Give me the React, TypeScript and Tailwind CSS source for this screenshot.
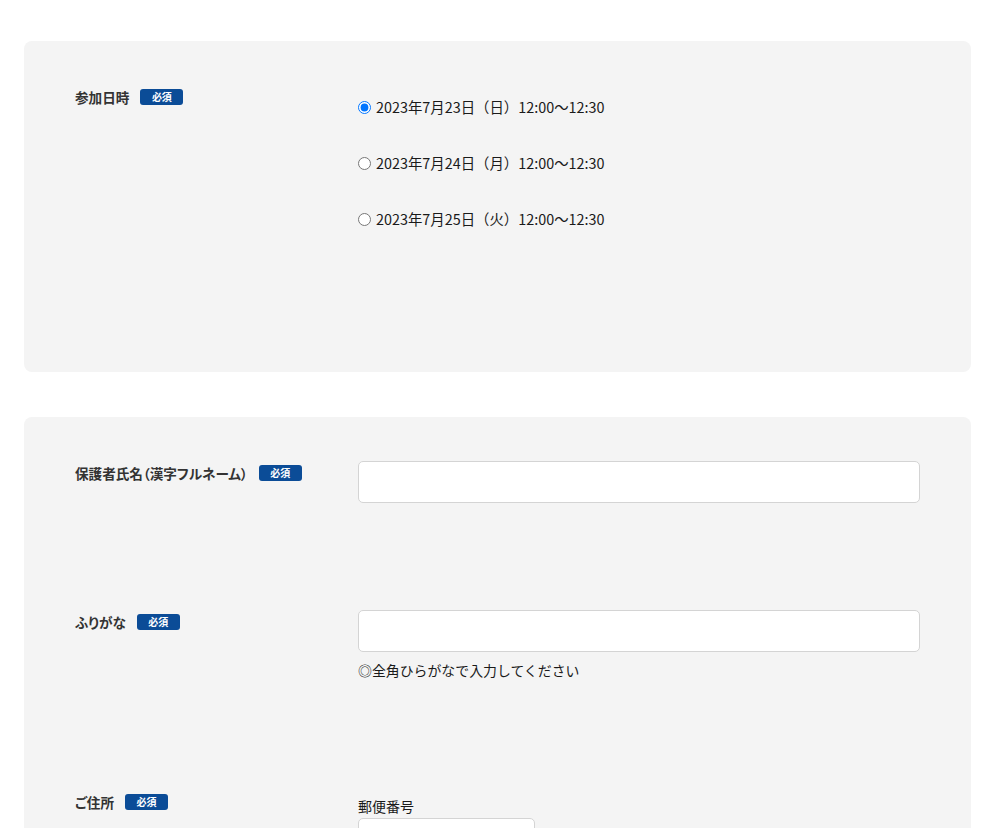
import React from "react";

const font = "font-['Noto_Sans_CJK_JP','Noto_Sans',sans-serif]";

function Badge() {
  return (
    <span className="inline-flex h-4 w-[43px] shrink-0 items-center justify-center rounded-[3px] bg-[#0b4c97] text-[10px] font-bold leading-none text-white">
      必須
    </span>
  );
}

function Label({ text, className = "" }: { text: string; className?: string }) {
  return (
    <div className={`flex items-center gap-[11px] self-start ${className}`}>
      <span className="text-[13.6px] font-bold leading-4 text-[#333] [font-feature-settings:'palt']">{text}</span>
      <Badge />
    </div>
  );
}

const options = [
  "2023年7月23日（日）12:00〜12:30",
  "2023年7月24日（月）12:00〜12:30",
  "2023年7月25日（火）12:00〜12:30",
];

export default function App() {
  const [sel, setSel] = React.useState(0);
  return (
    <div className={`min-h-[828px] bg-white pl-6 pr-[29px] pt-[41px] ${font}`}>
      <section className="grid grid-cols-[283px_1fr] rounded-lg bg-[#f4f4f4] px-[51px] pt-[48px] pb-[143px]">
        <Label text="参加日時" />
        <div className="mt-2 flex flex-col gap-9">
          {options.map((o, i) => (
            <label key={o} className="flex h-5 items-center gap-[5px] text-[14.4px] text-[#1a1a1a]">
              <input
                type="radio"
                name="date"
                checked={sel === i}
                onChange={() => setSel(i)}
                className="m-0 h-[13px] w-[13px]"
              />
              <span>{o}</span>
            </label>
          ))}
        </div>
      </section>

      <section className="mt-[45px] rounded-lg bg-[#f4f4f4] px-[51px] pt-[44px] pb-10">
        <div className="grid grid-cols-[283px_1fr]">
          <Label text="保護者氏名（漢字フルネーム）" className="mt-1" />
          <input className="h-[42px] w-full rounded-[5px] border border-[#d4d4d4] bg-white px-3" />
        </div>

        <div className="mt-[107px] grid grid-cols-[283px_1fr]">
          <Label text="ふりがな" className="mt-1" />
          <div>
            <input className="block h-[42px] w-full rounded-[5px] border border-[#d4d4d4] bg-white px-3" />
            <p className="mt-2 text-[13.9px] leading-5 text-[#1a1a1a]">◎全角ひらがなで入力してください</p>
          </div>
        </div>

        <div className="mt-[114px] grid grid-cols-[283px_1fr]">
          <Label text="ご住所" />
          <div>
            <p className="mt-[2px] text-[14px] leading-5 text-[#1a1a1a]">郵便番号</p>
            <input className="mt-[2px] block h-[42px] w-[177px] rounded-[5px] border border-[#d4d4d4] bg-white px-3" />
          </div>
        </div>
      </section>
    </div>
  );
}
